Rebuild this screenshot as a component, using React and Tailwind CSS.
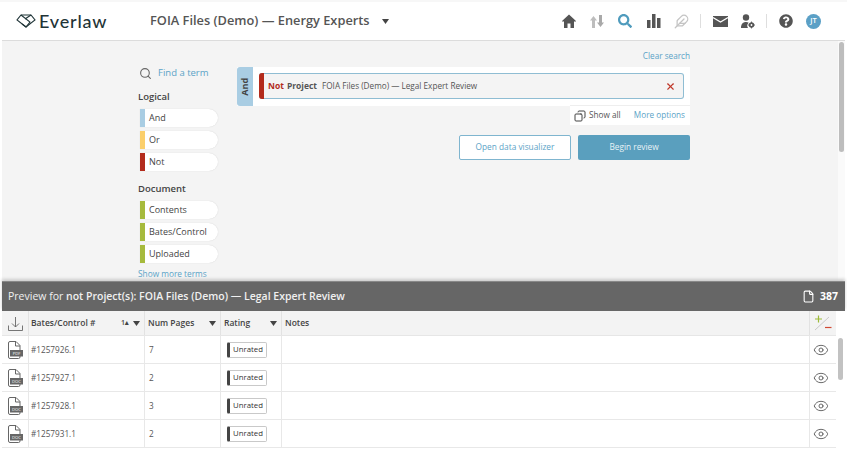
import React from "react";
import { FaSearch, FaQuestionCircle } from "react-icons/fa";
import { Feather, Eye, Search, File, Copy, X } from "lucide-react";

const logical = [
  { label: "And", bar: "bg-[#a9cde3]" },
  { label: "Or", bar: "bg-[#fbcf6b]" },
  { label: "Not", bar: "bg-[#b32b1c]" },
];
const documentTerms = ["Contents", "Bates/Control", "Uploaded"];

const rows = [
  { id: "#1257926.1", pages: "7", type: "PDF" },
  { id: "#1257927.1", pages: "2", type: "DOC" },
  { id: "#1257928.1", pages: "3", type: "DOC" },
  { id: "#1257931.1", pages: "2", type: "DOC" },
];

const cols = "grid grid-cols-[26px_116px_76px_61px_528px_27px]";

const Caret = () => (
  <svg width="7" height="5" viewBox="0 0 7 5" className="shrink-0">
    <path d="M0 0h7L3.5 5z" fill="#444" />
  </svg>
);

const Logo = () => (
  <svg width="20" height="14" viewBox="0 0 20 14" fill="none" stroke="#1f3437" strokeWidth="1.1">
    <path d="M10 13 1 6l4-5h10l4 5z" />
    <path d="M5 1l9 7-4 5-4-3M15 1 9 5" />
  </svg>
);

const Home = () => (
  <svg width="14" height="14" viewBox="0 0 14 14" fill="#555">
    <path d="M7 .5 14 7l-1 1-1-.9V14H8.500V9.500h-3V14H2V7.100L1 8 0 7z" />
  </svg>
);

const UpDown = () => (
  <svg width="14" height="15" viewBox="0 0 14 15" fill="#bdbdbd">
    <path d="M3.500 2 7 6.500H5V14H2V6.500H0z" />
    <path d="M10.500 13 7 8.500H9V1h3v7.500h2z" fill="#a9a9a9" />
  </svg>
);

const Bars = () => (
  <svg width="14" height="14" viewBox="0 0 14 14" fill="#555">
    <rect x="0" y="6" width="3.500" height="8" />
    <rect x="5" y="0" width="3.500" height="14" />
    <rect x="10" y="4" width="3.500" height="10" />
  </svg>
);

const Mail = () => (
  <svg width="15" height="11" viewBox="0 0 15 11">
    <path d="M0 0h15v11H0z" fill="#555" />
    <path d="M0 1.500 7.500 6 15 1.500" fill="none" stroke="#fff" strokeWidth="1.200" />
  </svg>
);

const UserGear = () => (
  <svg width="15" height="15" viewBox="0 0 15 15" fill="#555">
    <circle cx="6" cy="3.500" r="3.200" />
    <path d="M1 14c0-4 2-6 5-6 1.200 0 2 .3 2.700.8A4 4 0 0 0 8 14z" />
    <circle cx="11.500" cy="11" r="1.800" fill="none" stroke="#555" strokeWidth="1.800" />
    <path d="M11.500 7.600v1.200M11.500 13.200v1.200M8.100 11h1.200M13.700 11h1.200" stroke="#555" strokeWidth="1" />
  </svg>
);

const Download = () => (
  <svg width="15" height="15" viewBox="0 0 15 15" fill="none" stroke="#666" strokeWidth="0.900">
    <path d="M7.500 1v10M4 7.500 7.500 11 11 7.500" />
    <path d="M.5 9.500v5h14v-5" />
  </svg>
);

const DocIcon = ({ type }) => (
  <svg width="16" height="18" viewBox="0 0 16 18" fill="none">
    <path d="M1.500 2A1.500 1.500 0 0 1 3 .5h6l4 4V16A1.500 1.500 0 0 1 11.500 17.500H3A1.500 1.500 0 0 1 1.500 16z" fill="#fff" stroke="#666" />
    <path d="M8.500 .5V5h4.500" stroke="#666" />
    <rect x="3" y="9" width="13" height="6.500" fill="#666" />
    <text x="9.500" y="13.800" textAnchor="middle" fontSize="4.200" fill="#fff" fontFamily="'Open Sans', sans-serif">
      {type}
    </text>
  </svg>
);

const PlusMinus = () => (
  <svg width="18" height="16" viewBox="0 0 18 16" fill="none">
    <path d="M1 15 15 2" stroke="#c9c9c9" />
    <path d="M1 4h7M4.500 .5v7" stroke="#9dbb3a" strokeWidth="1.200" />
    <path d="M11 12.500h6.500" stroke="#d14a35" strokeWidth="1.200" />
  </svg>
);

const Term = ({ label, bar }) => (
  <div className="flex h-[18px] w-[78px] overflow-hidden rounded-r-full rounded-l-[3px] bg-white shadow-[0_0_1px_#c8c8c8]">
    <span className={`w-[5px] shrink-0 ${bar}`} />
    <span className="pl-[4px] text-[9px] leading-[18px] text-[#444]">{label}</span>
  </div>
);

const HeadCell = ({ title, sort, className = "" }) => (
  <div className={`flex items-center justify-between border-l border-[#e2e2e2] pl-[2px] pr-[4px] ${className}`}>
    <span className="text-[8.500px] font-semibold text-[#444]">{title}</span>
    <span className="flex items-center gap-[4px]">
      {sort && <span className="text-[7px] font-semibold text-[#444]">1▴</span>}
      {title !== "Notes" && <Caret />}
    </span>
  </div>
);

const App = () => {
  return (
    <div className="flex h-[449px] w-[847px] flex-col overflow-hidden border-t-2 border-[#f7f7f7] bg-white pl-[2px] pr-[2px] font-['Open_Sans',sans-serif]">
      {/* header */}
      <header className="flex h-[39px] shrink-0 items-center border-b border-[#dcdcdc] bg-white">
        <div className="flex w-[148px] items-center gap-[3px] pl-[14px]">
          <Logo />
          <span className="font-['Lato',sans-serif] text-[18px] font-medium leading-none tracking-[0.8px] text-[#1f3437]">
            Everlaw
          </span>
        </div>
        <h1 className="text-[12.800px] font-semibold text-[#555]">
          FOIA Files (Demo) — Energy Experts
        </h1>
        <span className="ml-[12px]">
          <Caret />
        </span>
        <nav className="ml-auto flex items-center pr-[24px]">
          <span className="mr-[14px] flex"><Home /></span>
          <span className="mr-[14px] flex"><UpDown /></span>
          <FaSearch className="mr-[15px] text-[14px] text-[#4f9bbd]" />
          <span className="mr-[13px] flex"><Bars /></span>
          <Feather className="mr-[11px] h-[15px] w-[15px] text-[#c4c4c4]" />
          <span className="mr-[12px] h-[14px] w-px bg-[#dedede]" />
          <span className="mr-[12px] flex"><Mail /></span>
          <span className="mr-[11px] flex"><UserGear /></span>
          <span className="mr-[12px] h-[14px] w-px bg-[#dedede]" />
          <FaQuestionCircle className="mr-[13px] text-[14px] text-[#555]" />
          <span className="flex h-[15px] w-[15px] items-center justify-center rounded-full bg-[#5ba0c6] text-[7.500px] font-semibold text-white">
            JT
          </span>
        </nav>
      </header>

      {/* search builder */}
      <main className="flex h-[240px] shrink-0 bg-[#f4f4f4]">
        <div className="flex w-[835px] shrink-0 pl-[136px]">
          {/* term list */}
          <aside className="w-[99px] shrink-0 pt-[25px]">
            <div className="flex items-center gap-[6px] pl-px">
              <Search className="h-[13px] w-[13px] text-[#666]" />
              <span className="text-[9.500px] leading-[14px] text-[#5ba3c7]">Find a term</span>
            </div>
            <h3 className="mt-[10px] text-[9.500px] font-semibold leading-[13px] text-[#444]">Logical</h3>
            <div className="mt-[6px] flex flex-col gap-[4px] pl-[2px]">
              {logical.map((t) => (
                <Term key={t.label} label={t.label} bar={t.bar} />
              ))}
            </div>
            <h3 className="mt-[11px] text-[9.500px] font-semibold leading-[13px] text-[#444]">Document</h3>
            <div className="mt-[6px] flex flex-col gap-[4px] pl-[2px]">
              {documentTerms.map((t) => (
                <Term key={t} label={t} bar="bg-[#a6ba3c]" />
              ))}
            </div>
            <a className="mt-[5px] block text-[8.300px] leading-[12px] text-[#5ba3c7]">Show more terms</a>
          </aside>

          {/* query */}
          <section className="w-[453px] shrink-0 pt-[9px]">
            <div className="text-right text-[8.200px] leading-[12px] text-[#5ba3c7]">Clear search</div>
            <div className="mt-[5px] flex h-[39px] bg-white">
              <div className="flex w-[16px] shrink-0 items-center justify-center rounded-l-[3px] bg-[#a9cde3]">
                <span className="-rotate-90 text-[9px] font-bold text-[#444]">And</span>
              </div>
              <div className="flex-1 px-[6px] py-[6px]">
                <div className="flex h-[26px] items-center rounded-[3px] border border-l-0 border-[#8fbdd3] bg-[#f4f4f4]">
                  <span className="h-[26px] w-[5px] shrink-0 rounded-l-[3px] bg-[#b32b1c]" />
                  <span className="ml-[4px] text-[8.500px] font-bold text-[#b32b1c]">Not</span>
                  <span className="ml-[3px] text-[8.500px] font-bold text-[#555]">Project</span>
                  <span className="ml-[5px] mt-px text-[8.200px] text-[#555]">FOIA Files (Demo) — Legal Expert Review</span>
                  <X className="ml-auto mr-[7px] h-[11px] w-[11px] text-[#c0392b]" strokeWidth={2.500} />
                </div>
              </div>
            </div>
            <div className="ml-auto flex h-[19px] w-[120px] items-center bg-white pl-[4px] pr-[5px] shadow-[0_-1px_0_#eeeeee]">
              <Copy className="h-[12px] w-[12px] -scale-x-100 text-[#444]" />
              <span className="ml-[3px] text-[8.200px] text-[#555]">Show all</span>
              <span className="ml-auto text-[8.200px] text-[#5ba3c7]">More options</span>
            </div>
            <div className="mt-[10px] flex justify-end gap-[7px]">
              <button className="h-[25px] w-[112px] rounded-[2px] border border-[#7fb5cf] bg-white text-[8.300px] text-[#5ba3c7]">
                Open data visualizer
              </button>
              <button className="h-[25px] w-[112px] rounded-[2px] bg-[#5a9fbe] text-[8.300px] text-[#e8f2f6]">
                Begin review
              </button>
            </div>
          </section>
        </div>
        {/* page scrollbar */}
        <div className="ml-[1px] flex-1 bg-[#fafafa] pl-[1px] pt-[1px]">
          <div className="h-[110px] w-[5px] rounded-full bg-[#bdbdbd]" />
        </div>
      </main>

      {/* preview bar */}
      <div className="flex h-[30px] shrink-0 items-center justify-between border-t border-[#888] bg-[#666666] pl-[6px] pr-[7px] text-white shadow-[0_-2px_3px_#cccccc]">
        <span className="text-[10.500px] font-semibold text-[#f0f0f0]">
          <span className="font-normal">Preview for</span> not Project(s): FOIA Files (Demo) — Legal Expert Review
        </span>
        <span className="flex items-center gap-[5px]">
          <File className="h-[13px] w-[13px]" />
          <span className="text-[10.500px] font-bold">387</span>
        </span>
      </div>

      {/* table */}
      <div className="flex min-h-0 flex-1">
        <div className="w-[834px] shrink-0">
          <div className={`${cols} h-[25px] border-b border-[#e6e6e6] bg-[#f3f3f3]`}>
            <div className="flex items-center justify-center"><Download /></div>
            <HeadCell title="Bates/Control #" sort />
            <HeadCell title="Num Pages" className="pl-[3px]" />
            <HeadCell title="Rating" className="pl-[3px]" />
            <HeadCell title="Notes" className="pl-[3px]" />
            <div className="flex items-center justify-center border-l border-[#e2e2e2]"><PlusMinus /></div>
          </div>
          {rows.map((row) => (
            <div key={row.id} className={`${cols} h-[28px] border-b border-[#e8e8e8] bg-white`}>
              <div className="flex items-center justify-center"><DocIcon type={row.type} /></div>
              <div className="flex items-center border-l border-[#e8e8e8] pl-[2px] pt-px text-[8.200px] text-[#555]">{row.id}</div>
              <div className="flex items-center border-l border-[#e8e8e8] pl-[4px] pt-px text-[8.200px] text-[#555]">{row.pages}</div>
              <div className="flex items-center border-l border-[#e8e8e8] pl-[6px]">
                <span className="flex h-[16px] w-[40px] items-center justify-center rounded-[2px] border border-l-[3px] border-[#c9c9c9] border-l-[#444] bg-white text-[7.800px] text-[#333]">
                  Unrated
                </span>
              </div>
              <div className="border-l border-[#e8e8e8]" />
              <div className="flex items-center border-l border-[#e8e8e8] pl-[3px]">
                <Eye className="h-[16px] w-[16px] text-[#555]" strokeWidth={1.300} />
              </div>
            </div>
          ))}
        </div>
        <div className="flex-1 bg-white pl-[2px] pt-[27px]">
          <div className="h-[42px] w-[5px] rounded-full bg-[#c2c2c2]" />
        </div>
      </div>
    </div>
  );
};

export default App;
